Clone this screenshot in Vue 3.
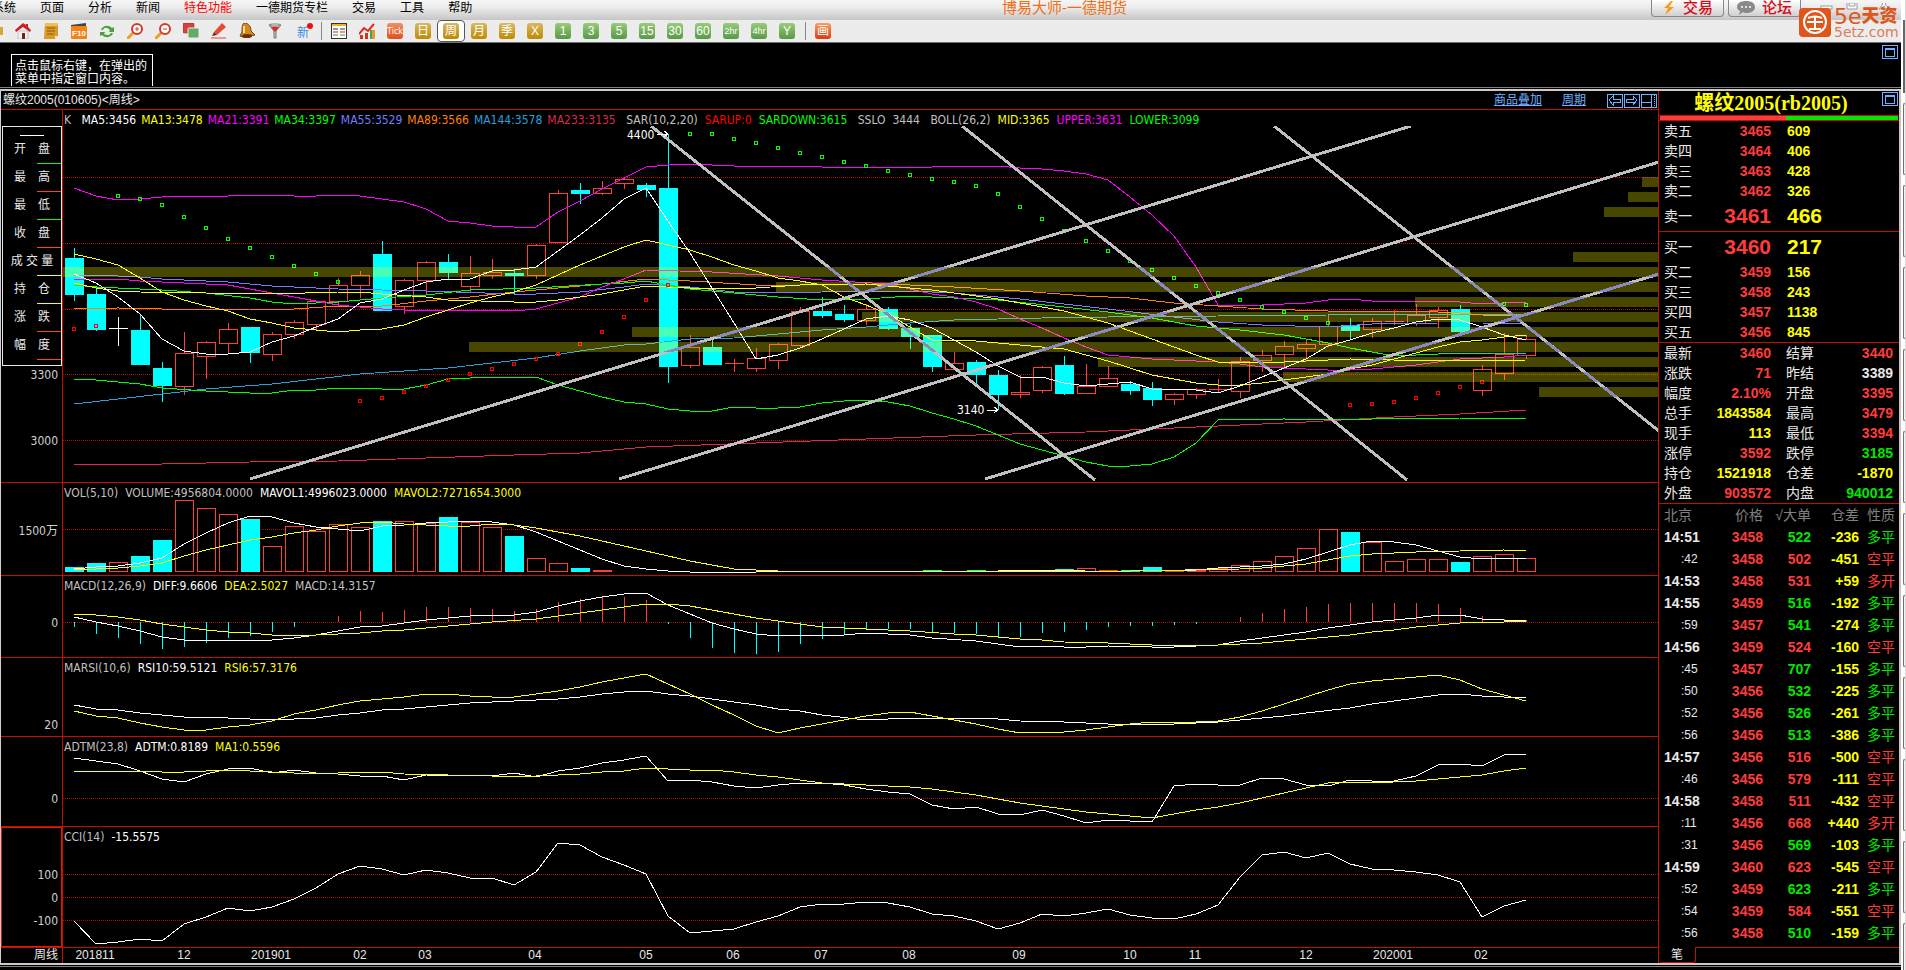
<template>
  <div class="screen">
    <div class="desk">
      <header class="menubar">
        <nav class="menu">
          <a v-for="item in menu" :key="item" href="#" :class="{ hot: item === '特色功能' }">{{ item }}</a>
        </nav>
        <h1 class="app-title">博易大师-一德期货</h1>
        <div class="top-actions">
          <button type="button" class="top-btn">
            <svg width="14" height="14" viewBox="0 0 14 14"><path d="M9 0 2 7h4l-3 7 9-8H7l4-6z" fill="#f59a1c" /></svg>
            交易
          </button>
          <button type="button" class="top-btn">
            <svg width="18" height="14" viewBox="0 0 18 14">
              <path d="M9 0c5 0 9 2 9 6s-4 6-9 6c-1 0-2 0-3-1l-4 3 1-4C1 9 0 8 0 6c0-4 4-6 9-6z" fill="#8a8a8a" />
              <g fill="#fff"><circle cx="5" cy="6" r="1" /><circle cx="9" cy="6" r="1" /><circle cx="13" cy="6" r="1" /></g>
            </svg>
            论坛
          </button>
        </div>
        <div class="win-controls">
          <svg width="90" height="8" viewBox="0 0 90 8" fill="#fff" stroke="#9a9a9a">
            <rect x="6" y="3" width="11" height="3" />
            <path d="M32 -4h10v10h-10zM34 0h6v3h-6z" />
            <path d="m64 6 4-5-4-5h3l2 3 2-3h3l-4 5 4 5h-3l-2-3-2 3z" />
          </svg>
        </div>
        <div class="brand">
          <svg width="32" height="29" viewBox="0 0 32 29">
            <rect width="32" height="29" rx="4" fill="#e0551a" />
            <circle cx="16" cy="14" r="11" fill="none" stroke="#fff" stroke-width="2" />
            <path d="M9 10q7-3 14 0M8 14h16M16 9v12M10 21h12" fill="none" stroke="#fff" stroke-width="2" />
          </svg>
          <div class="brand-text">
            <div class="brand-name"><span>5e</span>天资</div>
            <div class="brand-url">5etz.com</div>
          </div>
        </div>
      </header>

      <div class="toolbar">
        <button type="button" class="tool" aria-label="首页">
          <svg viewBox="0 0 16 16"><path d="M3 8h10v8H3z" fill="#f0f0f0" stroke="#999" stroke-width=".5" /><path d="M8 0 0 7l1 2 7-5 7 5 1-2-3-3V1h-2v1z" fill="#c8202c" /><path d="M7 10h3v6H7z" fill="#7a2018" /></svg>
        </button>
        <button type="button" class="tool" aria-label="记事">
          <svg viewBox="0 0 16 16"><path d="M2 0h13v13l-3 3H1z" fill="#d89a28" /><path d="M2 0h13v3H2z" fill="#f0c050" /><path d="M4 5h8M4 8h8M4 11h7" stroke="#8a5a10" /><path d="m12 16 3-3h-3z" fill="#fce8a8" /></svg>
        </button>
        <button type="button" class="tool" aria-label="F10">
          <svg viewBox="0 0 16 16"><path d="M0 2 15 0v4H0z" fill="#444" /><rect y="3" width="16" height="13" rx="1" fill="#f08418" /><text x="8" y="13" class="f10">F10</text></svg>
        </button>
        <button type="button" class="tool" aria-label="刷新">
          <svg viewBox="0 0 16 16"><path d="M2 7c1-4 7-6 11-2l2-1v5H10l1-2C8 4 5 4 4 7zM14 10c-1 4-7 6-11 2l-2 1V9h5l-1 2c3 2 6 1 7-1z" fill="#4aa23a" /></svg>
        </button>
        <button v-for="sign in ['+', '-']" :key="sign" type="button" class="tool" :aria-label="sign === '+' ? '放大' : '缩小'">
          <svg viewBox="0 0 16 16">
            <path d="m1 15 6-6" stroke="#f0a01c" stroke-width="3" stroke-linecap="round" />
            <circle cx="10" cy="6" r="5" fill="#fff" stroke="#d83828" stroke-width="2" />
            <path :d="sign === '+' ? 'M10 4v4M8 6h4' : 'M8 6h4'" stroke="#d83828" />
          </svg>
        </button>
        <button type="button" class="tool" aria-label="叠加">
          <svg viewBox="0 0 16 16"><rect width="11" height="10" rx="1" fill="#d84040" stroke="#8a2020" stroke-width=".5" /><rect x="5" y="5" width="11" height="10" rx="1" fill="#68a868" stroke="#dff0df" /></svg>
        </button>
        <button type="button" class="tool" aria-label="画笔">
          <svg viewBox="0 0 16 16"><path d="m3 9 8-9 4 4-9 8z" fill="#e44c30" /><path d="m3 9 3 3-5 1z" fill="#603018" /><path d="M0 15h15" stroke="#f04040" stroke-width="1" /></svg>
        </button>
        <button type="button" class="tool" aria-label="预警">
          <svg viewBox="0 0 16 16"><path d="M5 0c5 0 7 4 7 8l4 4-12 2-3-1 2-4c0-4 0-7 2-9z" fill="#d08a20" stroke="#7a4208" /><path d="M5 3v7" stroke="#ffe080" stroke-width="2" /><ellipse cx="8" cy="13" rx="5" ry="2" fill="#6a3008" /></svg>
        </button>
        <button type="button" class="tool" aria-label="筛选">
          <svg viewBox="0 0 16 16"><path d="M2 2h12l-5 6v7H7V8z" fill="#c8c8c8" stroke="#777" /><path d="M4 4h8L8 9z" fill="#e02828" /><ellipse cx="8" cy="2" rx="6" ry="1" fill="#fff" stroke="#777" /></svg>
        </button>
        <button type="button" class="tool fresh">新<i class="dot"></i></button>
        <span class="sep"></span>
        <button type="button" class="tool" aria-label="报价">
          <svg viewBox="0 0 16 16"><rect x="0" y="0" width="16" height="16" fill="#fff" stroke="#333" stroke-width="2" /><path d="M1 1h14v2H1z" fill="#f0b020" /><path d="M2 6h5M9 6h5" stroke="#333" /><path d="M2 9h5M9 9h5" stroke="#e02020" /><path d="M2 12h5M9 12h5" stroke="#20a040" /></svg>
        </button>
        <button type="button" class="tool" aria-label="走势">
          <svg viewBox="0 0 16 16"><path d="M1 12h3v4H1z" fill="#d83020" /><path d="M6 10h3v6H6z" fill="#d83020" /><path d="M11 7h2v9h-2z" fill="#50a040" /><path d="M13 7h3v9h-3z" fill="#d8a030" /><path d="m0 11 5-6 4 3 6-7" fill="none" stroke="#e02828" stroke-width="2" /></svg>
        </button>
        <button
          v-for="p in periods"
          :key="p.text"
          type="button"
          class="tool period"
          :class="[p.tone, { active: p.text === '周', small: p.text.endsWith('hr') }]"
        >
          <span>{{ p.text }}</span>
        </button>
        <span class="sep"></span>
        <button type="button" class="tool period draw"><span>画</span></button>
      </div>

      <section class="notice">
        <p class="notice-box">点击鼠标右键，在弹出的<br>菜单中指定窗口内容。</p>
        <button type="button" class="max-btn" aria-label="最大化"></button>
      </section>

      <main class="workspace">
        <section class="chart">
          <div class="chart-title">
            <span>螺纹2005(010605)&lt;周线&gt;</span>
            <div class="chart-links">
              <a href="#">商品叠加</a>
              <a href="#">周期</a>
              <svg width="51" height="15" viewBox="0 0 51 15" fill="none" stroke="#6fb1ff" shape-rendering="crispEdges">
                <path d="M1 1h15v13H1zM18 1h15v13H18zM35 1h15v13H35z" />
                <path d="M3 7l4-4v3h7v3H7v3zM31 7l-4-4v3h-7v3h7v3z" />
                <path d="M36 9h9M45 1v13" />
                <path d="M48 2v11" stroke-dasharray="1 1" />
              </svg>
            </div>
          </div>

          <div
            v-for="panel in panels"
            :key="panel.id"
            class="panel"
            :class="panel.id"
            :style="{ flexGrow: panel.bottom - panel.top }"
          >
            <div class="axis">
              <svg :viewBox="`1 ${panel.top} 61 ${panel.bottom - panel.top}`" preserveAspectRatio="none">
                <text v-for="l in panel.labels" :key="l[0]" x="58" :y="l[1] + 5" class="axis-text">{{ l[0] }}</text>
              </svg>
              <div v-if="panel.id === 'k'" class="info-box">
                <div class="info-cursor"></div>
                <div v-for="f in fields" :key="f.name" class="info-row">
                  <span>{{ f.name }}</span>
                  <i :class="f.tone"></i>
                </div>
              </div>
            </div>
            <div class="plot">
              <div class="legend">
                <span v-for="l in panel.legend" :key="l[0]" :style="{ color: l[1] }">{{ l[0] }}</span>
              </div>
              <svg
                :viewBox="`63 ${panel.top + 16} 1595 ${panel.bottom - panel.top - 16}`"
                preserveAspectRatio="none"
                shape-rendering="crispEdges"
                fill="none"
              >
                <line v-for="g in panel.grid" :key="g" x1="63" x2="1658" :y1="g" :y2="g" class="grid" />

                <template v-if="panel.id === 'k'">
                  <g v-for="c in candles" :key="c.x" :class="c.tone">
                    <path :d="c.wick" />
                    <rect v-if="c.h" :x="c.x - 9" :y="c.y" width="18" :height="c.h" class="body" />
                    <path v-else :d="`M${c.x - 9} ${c.y}h19`" />
                  </g>
                </template>
                <template v-if="panel.id === 'vol'">
                  <rect
                    v-for="v in volumes"
                    :key="v.x"
                    :x="v.x - 9"
                    :y="v.y"
                    width="18"
                    :height="571 - v.y"
                    :class="v.tone"
                    class="body"
                  />
                </template>
                <template v-if="panel.id === 'macd'">
                  <path v-for="m in macdBars" :key="m.x" :d="`M${m.x} 622V${m.y}`" :class="m.tone" />
                </template>

                <polyline v-for="(s, i) in panel.series" :key="i" :points="s.points" :stroke="s.color" />

                <template v-if="panel.id === 'k'">
                  <circle v-for="(d, i) in sar" :key="i" :cx="d.x" :cy="d.y" r="2" :stroke="d.color" />
                  <rect v-for="b in profile" :key="b[1]" :x="b[0]" :y="b[1]" :width="1658 - b[0]" height="10" class="profile" />
                  <clipPath id="profile-clip">
                    <rect v-for="b in profile" :key="b[1]" :x="b[0]" :y="b[1]" :width="1658 - b[0]" height="10" />
                  </clipPath>
                  <path :d="trendLines" class="trend" />
                  <path :d="trendLines" class="trend over" clip-path="url(#profile-clip)" />
                  <text x="627" y="139" class="mark">4400</text>
                  <text x="957" y="414" class="mark">3140</text>
                  <path d="M657 134h11m-4-3 4 3-4 3M987 410h11m-4-3 4 3-4 3" stroke="#fff" />
                </template>
              </svg>
            </div>
          </div>

          <div class="dates">
            <div class="axis">周线</div>
            <svg viewBox="63 948 1595 15" preserveAspectRatio="none">
              <text v-for="d in dates" :key="d[1]" :x="d[1]" y="959" class="date-text">{{ d[0] }}</text>
            </svg>
          </div>
        </section>

        <aside class="quote">
          <div class="quote-title">
            <h2>螺纹2005(rb2005)</h2>
            <button type="button" class="max-btn" aria-label="最大化"></button>
          </div>
          <div class="ratio"><i></i></div>

          <table v-for="(side, n) in book" :key="n" class="book">
            <tbody>
              <tr v-for="r in side" :key="r[0]" :class="{ best: r[0].endsWith('一') }">
                <th scope="row">{{ r[0] }}</th>
                <td class="red price">{{ r[1] }}</td>
                <td class="yellow">{{ r[2] }}</td>
              </tr>
            </tbody>
          </table>

          <table class="stats">
            <tbody>
              <tr v-for="r in stats" :key="r[0]">
                <th scope="row">{{ r[0] }}</th>
                <td :class="r[2]">{{ r[1] }}</td>
                <th scope="row">{{ r[3] }}</th>
                <td :class="r[5]">{{ r[4] }}</td>
              </tr>
            </tbody>
          </table>

          <table class="ticks">
            <thead>
              <tr><th>北京</th><th>价格</th><th>√大单</th><th>仓差</th><th>性质</th></tr>
            </thead>
            <tbody>
              <tr v-for="(t, i) in ticks" :key="i">
                <td :class="{ sec: t.time[0] === ':' }">{{ t.time }}</td>
                <td class="red">{{ t.price }}</td>
                <td :class="t.tone">{{ t.size }}</td>
                <td class="yellow">{{ t.diff }}</td>
                <td :class="t.tone">{{ t.kind }}</td>
              </tr>
            </tbody>
          </table>

          <div class="tabs"><button type="button">笔</button><i></i></div>
        </aside>
      </main>
      <footer class="bottom-edge"></footer>
    </div>
    <div class="edge">
      <i class="edge-bar"></i>
      <i v-for="n in 11" :key="n" class="edge-box"></i>
    </div>
  </div>
</template>

<script setup>
const menu = ['系统', '页面', '分析', '新闻', '特色功能', '一德期货专栏', '交易', '工具', '帮助']

const periods = [
  { text: 'Tick', tone: 'tick' },
  ...['日', '周', '月', '季', 'X'].map(text => ({ text, tone: 'gold' })),
  ...['1', '3', '5', '15', '30', '60', '2hr', '4hr', 'Y'].map(text => ({ text, tone: 'lime' }))
]

const fields = [
  { name: '开　盘', tone: 'g' },
  { name: '最　高', tone: 'r' },
  { name: '最　低', tone: 'g' },
  { name: '收　盘', tone: 'r' },
  { name: '成 交 量', tone: 'y' },
  { name: '持　仓', tone: 'y' },
  { name: '涨　跌', tone: 'r' },
  { name: '幅　度', tone: 'r' }
]

// one bar every 22 units, the first one at 74
const barX = i => 74 + 22 * i
// samples are kept in thirds of a unit below the given base line
const level = (v, base) => base + Math.round(v / 3)

const pairs = text => text.split(' ').map(p => p.split(':').map(Number))

const line = (color, base, text) => ({
  color,
  points: pairs(text).map(([i, v]) => `${barX(i)},${level(v, base)}`).join(' ')
})

// kind, high, body top, body bottom, low
const candleData = `d 414 444 552 573|d 529 552 657 663|w 621 655 655 708|d 612 660 762 762|d 756 774 825 876
u 666 730 827 855|u 693 697 737 807|u 639 658 698 732|d 651 651 726 759|u 666 673 731 753|u 630 637 671 687
u 574 574 641 660|u 504 526 574 588|u 483 496 524 565|d 393 432 600 603|u 507 511 587 612|u 453 457 509 552
d 432 456 486 507|u 438 490 527 547|u 447 487 494 507|d 480 489 495 552|u 402 406 494 507|u 240 250 395 395
d 219 240 249 282|u 213 235 248 255|u 204 208 218 237|d 219 225 237 261|d 72 234 768 819|u 675 712 764 774
d 690 711 762 762|u 747 760 760 786|u 714 745 773 786|u 699 703 749 777|u 591 604 704 711|d 561 603 615 624
d 585 612 627 636|u 582 598 629 645|d 591 597 654 660|d 642 654 678 717|d 675 675 768 786|u 726 760 776 780
d 750 756 792 831|d 780 795 852 900|u 795 847 851 864|u 768 772 839 849|d 738 765 849 855|u 762 827 848 852
u 768 805 827 827|d 813 822 840 855|d 816 834 867 888|u 849 853 866 885|u 834 838 851 867|u 807 838 838 846
u 741 754 842 864|u 720 736 749 786|u 693 709 731 774|u 690 703 713 744|u 615 647 701 710|d 624 645 660 690
u 624 634 656 684|u 600 634 634 645|u 582 616 638 648|u 591 601 620 654|d 585 597 663 669|u 766 778 839 858
u 669 731 788 810|u 676 688 734 748`

const tones = { d: 'down', u: 'up', w: 'flat' }

const candles = candleData.split(/[|\n]/).map((row, i) => {
  const [kind, ...rest] = row.split(' ')
  const [high, top, bottom, low] = rest.map(v => level(Number(v), 110))
  const x = barX(i)
  return { x, y: top, h: bottom - top, tone: tones[kind], wick: `M${x} ${high}V${top}M${x} ${bottom}V${low}` }
})

const volumes = ('d276 d264 u262 d243 d195 u76 u100 u118 d132 u214 u154 u169 u148 u157 d138 u139 u145 d126 u142 u157 ' +
  'd183 u250 u265 d279 u285 u287 d287 d287 u287 d287 u287 u287 u287 d287 u287 u287 d287 u287 u287 d285 u287 d285 u287 ' +
  'u287 u287 d282 u280 u286 d286 d276 u284 u284 u280 u271 u259 u244 u220 u163 d171 u202 u259 u253 u253 d261 u244 u238 u250')
  .split(' ')
  .map((v, i) => ({ x: barX(i), y: level(Number(v.slice(1)), 475), tone: tones[v[0]] }))

const macdBars = pairs('0:456 1:477 2:489 3:507 4:522 5:516 6:504 7:489 8:483 9:471 10:456 12:423 13:408 14:411 15:405 ' +
  '16:396 17:396 18:399 19:402 20:408 21:402 22:381 23:372 24:366 25:366 26:375 27:447 28:489 29:519 30:534 31:537 ' +
  '32:531 33:507 34:492 35:480 36:465 37:462 38:462 39:471 40:474 41:477 42:486 43:486 44:474 45:471 46:465 47:456 ' +
  '48:453 49:453 50:450 51:446 53:426 54:414 55:402 56:396 57:387 58:384 59:384 60:384 61:384 62:387 63:399 64:423 65:433 66:435')
  .map(([i, v]) => ({ x: barX(i), y: level(v, 475), tone: v > 442 ? 'down' : 'up' }))

const dots = (color, text) => pairs(text).map(([i, v]) => ({ color, x: barX(i), y: level(v, 110) }))

const sar = [
  ...dots('#00ff00', '2:259 3:268 4:286 5:322 6:355 7:388 8:415 9:442 10:469 11:493 12:517 28:73 29:73 30:88 31:100 32:115 ' +
    '33:130 34:142 35:157 36:169 37:184 38:196 39:208 40:217 41:229 42:253 43:292 44:328 45:364 46:394 47:424 48:454 ' +
    '49:481 50:505 51:529 52:550 53:571 54:590 55:607 56:625 57:640 65:583 66:586'),
  ...dots('#ff0000', '0:658 1:649 13:874 14:865 15:847 16:829 17:811 18:793 19:778 20:763 21:748 22:733 23:703 24:667 ' +
    '25:622 26:571 27:526 58:886 59:883 60:877 61:865 62:850 63:832 64:817')
]

// left edge and top of every price volume bar
const profile = [
  [1642, 177], [1628, 192], [1604, 207], [1573, 252], [63, 267], [776, 282], [1415, 297],
  [862, 312], [632, 327], [469, 342], [1098, 357], [1283, 372], [1539, 387]
]

const trendLines = 'M250 479L1411 126M619 479L1659 162M985 479L1659 274M651 126L861 293L962 374L1095 480' +
  'M962 126L1086 225L1290 386L1407 480M1274 126L1659 431'

const panels = [
  {
    id: 'k',
    top: 110,
    bottom: 482,
    labels: [['3300', 374], ['3000', 440]],
    grid: [177, 243, 309, 374, 440],
    legend: [
      ['K\u2002', '#c0c0c0'], ['MA5:3456', '#ffffff'], ['MA13:3478', '#ffff00'], ['MA21:3391', '#ff00ff'],
      ['MA34:3397', '#00ff00'], ['MA55:3529', '#7a7aff'], ['MA89:3566', '#ff8000'], ['MA144:3578', '#28a0dc'],
      ['MA233:3135\u00a0', '#dc2850'], ['SAR(10,2,20)', '#c0c0c0'], ['SARUP:0', '#ff0000'],
      ['SARDOWN:3615\u00a0', '#00ff00'], ['SSLO', '#c0c0c0'], ['3444\u00a0', '#c0c0c0'], ['BOLL(26,2)', '#c0c0c0'],
      ['MID:3365', '#ffff00'], ['UPPER:3631', '#ff00ff'], ['LOWER:3099', '#00ff00']
    ],
    series: [
      line('#dc2850', 110, '0:1063 4:1063 8:1057 12:1054 16:1045 20:1036 23:1028 26:1012 31:1000 36:986 41:974 46:965 52:949 56:936 60:922 63:913 66:901'),
      line('#28a0dc', 110, '0:883 2:868 4:853 6:838 9:823 11:808 13:793 15:784 17:775 19:760 21:745 23:724 25:706 26:702 28:688 30:684 32:673 34:661 36:650 38:640 40:631 44:625 47:622 52:619 57:616 66:611'),
      line('#ff8000', 110, '0:598 2:595 6:601 8:598 10:596 12:589 14:589 16:574 18:562 20:547 22:535 24:523 26:508 28:514 31:526 33:524 36:523 38:526 40:532 43:544 46:559 48:565 50:580 52:589 54:598 57:604 60:604 62:607 63:609 64:616 66:619'),
      line('#7a7aff', 110, '0:496 1:496 3:502 4:508 7:517 9:529 12:538 16:544 20:553 21:553 23:547 25:532 26:522 28:532 30:547 32:550 34:547 36:544 38:544 40:550 43:568 45:582 47:598 50:620 52:636 54:646 57:650 59:643 62:638 64:640 66:643'),
      line('#00ff00', 110, '0:526 1:532 2:535 4:541 6:550 8:565 9:576 10:583 12:577 13:571 14:565 16:556 18:541 21:535 24:523 25:520 26:514 27:526 28:538 30:550 32:562 34:571 36:568 38:559 40:565 42:571 45:590 47:605 49:625 51:648 53:661 55:676 57:700 58:715 60:739 62:733 63:730 66:730'),
      line('#ff00ff', 110, '0:508 2:508 3:514 5:520 7:526 8:538 9:550 10:562 11:574 12:586 13:590 14:598 15:601 19:601 20:604 21:598 22:580 23:562 24:532 25:506 26:481 29:487 32:499 34:511 37:523 38:537 39:552 40:562 41:576 42:598 43:628 44:655 45:683 46:710 47:736 48:740 49:748 52:757 53:763 54:770 56:778 57:781 58:781 59:778 61:766 62:757 63:748 65:742 66:734'),
      line('#00ff00', 110, '0:808 1:811 2:817 3:823 4:835 6:844 8:850 9:850 10:841 11:841 12:835 13:835 14:838 15:838 16:826 17:808 18:805 19:802 21:802 22:826 23:844 24:860 25:877 26:883 27:898 28:904 29:904 30:892 31:895 32:895 33:892 34:880 35:874 36:871 37:877 38:889 39:910 40:926 41:949 42:976 43:1003 44:1019 45:1039 46:1057 47:1069 48:1069 49:1063 50:1042 51:1000 52:931 55:928 58:930 60:925 61:928 63:925 66:925'),
      line('#ff00ff', 110, '0:235 1:259 2:271 3:268 4:262 5:259 7:259 8:256 9:256 10:259 11:259 12:256 13:259 14:268 15:277 16:298 17:334 18:340 19:349 20:352 21:352 22:307 23:274 24:238 25:204 26:172 27:166 28:163 29:166 30:169 33:169 34:172 39:172 40:169 42:169 43:173 44:178 45:184 46:193 47:211 48:260 49:316 50:379 51:472 52:586 54:586 56:580 57:571 58:568 59:574 60:577 61:574 62:574 63:577 64:583 65:580 66:577'),
      line('#ffff00', 110, '0:520 1:535 2:544 3:547 9:553 12:547 13:547 14:553 16:562 17:570 20:577 21:577 22:571 23:562 24:553 25:540 26:528 28:533 31:533 33:526 36:523 37:527 39:541 42:566 45:603 47:640 49:688 50:711 51:734 52:757 55:757 58:748 60:751 63:751 64:754 66:750'),
      line('#ffff00', 110, '0:433 1:448 2:466 3:504 4:546 5:570 6:589 7:604 8:628 9:640 10:655 11:661 12:667 13:661 14:658 15:646 16:622 17:600 18:580 19:562 20:547 21:526 22:496 23:466 24:438 25:412 26:391 27:406 28:421 29:442 30:464 31:484 32:503 33:514 34:526 35:562 36:585 37:612 38:650 39:690 40:691 41:694 42:700 43:706 44:710 45:718 46:736 47:754 48:775 49:796 50:808 51:820 52:826 53:826 54:820 55:811 56:801 57:792 58:778 59:764 60:748 61:729 62:710 63:695 64:691 65:682 66:676'),
      line('#ffffff', 110, '0:493 1:520 2:562 3:612 4:688 5:724 6:733 7:733 8:727 9:697 10:679 11:652 12:628 13:580 14:568 15:541 16:517 17:508 18:508 19:484 20:481 21:472 22:424 23:376 24:325 25:268 26:235 27:334 28:430 29:534 30:640 31:748 32:736 33:715 34:688 35:658 36:628 37:619 38:630 39:655 40:690 41:727 42:768 43:802 44:802 45:820 46:829 47:821 48:817 49:838 50:838 51:841 52:848 53:829 54:802 55:775 56:748 57:709 58:691 59:670 60:655 61:637 62:628 63:631 64:652 65:676 66:691')
    ]
  },
  {
    id: 'vol',
    top: 483,
    bottom: 575,
    labels: [['1500万', 530]],
    grid: [529],
    legend: [['VOL(5,10)', '#c0c0c0'], ['VOLUME:4956804.0000', '#c0c0c0'], ['MAVOL1:4996023.0000', '#ffffff'], ['MAVOL2:7271654.3000', '#ffff00']],
    series: [
      line('#ffffff', 475, '0:282 1:277 2:274 3:264 4:249 5:207 6:175 7:145 8:124 9:127 10:145 11:157 12:163 13:169 14:154 15:151 16:145 17:142 18:139 19:142 20:151 21:172 22:199 23:226 24:252 25:274 26:283 27:289 28:292 31:292 34:289 40:290 42:287 46:284 49:285 51:284 52:280 53:277 54:274 55:268 56:253 57:231 58:211 59:199 60:202 61:211 62:229 63:247 64:253 65:250 66:250'),
      line('#ffff00', 475, '0:284 2:280 3:274 4:264 5:243 6:226 7:210 8:195 9:187 10:175 11:166 12:154 13:145 14:142 15:148 16:151 17:154 18:154 19:148 20:151 21:160 22:172 23:184 24:199 25:214 26:229 27:244 28:259 29:271 30:283 32:289 34:291 40:289 48:287 53:283 54:280 55:274 56:268 57:256 58:244 59:238 61:232 63:229 65:226 66:229')
    ]
  },
  {
    id: 'macd',
    top: 576,
    bottom: 657,
    labels: [['0', 622]],
    grid: [622],
    legend: [['MACD(12,26,9)', '#c0c0c0'], ['DIFF:9.6606', '#ffffff'], ['DEA:2.5027', '#ffff00'], ['MACD:14.3157', '#c0c0c0']],
    series: [
      line('#ffffff', 475, '0:427 1:442 2:454 3:469 4:487 5:496 9:496 10:490 11:481 12:469 13:457 14:454 15:445 16:436 17:430 18:424 19:421 20:421 21:412 22:394 23:379 24:367 25:358 26:355 27:391 28:418 29:445 30:463 31:478 32:484 33:481 35:481 36:475 37:478 38:481 39:490 41:499 43:517 44:514 45:517 46:517 47:514 49:517 50:515 52:511 53:499 55:481 56:472 57:460 59:442 61:430 62:421 63:421 64:433 65:436 66:437'),
      line('#ffff00', 475, '0:418 1:421 2:427 3:436 4:448 5:457 6:466 7:472 8:475 9:481 11:481 13:475 14:469 15:466 17:454 19:442 21:433 22:424 24:406 25:397 26:388 27:388 28:394 29:406 30:418 31:430 32:439 33:448 34:456 36:463 38:469 40:478 41:481 43:493 44:496 45:502 47:505 49:511 52:511 54:505 56:493 58:481 59:472 60:466 61:457 63:445 64:442 65:442 66:439')
    ]
  },
  {
    id: 'marsi',
    top: 658,
    bottom: 736,
    labels: [['20', 724]],
    grid: [],
    legend: [['MARSI(10,6)', '#c0c0c0'], ['RSI10:59.5121', '#ffffff'], ['RSI6:57.3176', '#ffff00']],
    series: [
      line('#ffffff', 475, '0:691 1:703 2:706 3:715 5:727 6:727 7:730 9:736 10:733 11:730 12:721 13:715 14:706 15:703 18:685 20:679 22:673 23:667 24:658 25:652 26:649 27:658 28:664 30:682 31:691 32:703 33:709 34:720 36:736 38:730 41:730 42:733 43:739 45:742 47:748 50:748 52:742 55:724 56:715 58:700 59:688 61:670 62:661 63:658 64:664 66:670'),
      line('#ffff00', 475, '0:709 1:724 2:730 3:745 4:757 5:766 6:766 7:757 8:751 9:739 10:718 11:706 12:691 13:679 15:667 16:658 17:658 18:664 19:667 20:665 21:658 22:649 23:637 24:622 26:598 27:628 28:658 29:691 30:721 31:754 32:775 33:760 34:747 35:736 36:724 37:715 38:712 39:724 40:736 41:748 42:763 43:775 44:772 45:772 46:766 47:757 48:748 49:742 50:745 52:739 53:727 54:709 55:688 56:667 57:646 58:628 59:619 60:613 62:601 63:616 64:643 65:661 66:679')
    ]
  },
  {
    id: 'adtm',
    top: 737,
    bottom: 826,
    labels: [['0', 798]],
    grid: [798],
    legend: [['ADTM(23,8)', '#c0c0c0'], ['ADTM:0.8189', '#ffffff'], ['MA1:0.5596', '#ffff00']],
    series: [
      line('#ffffff', 730, '0:85 1:94 2:103 3:124 4:148 5:157 6:133 7:118 8:115 9:130 10:121 11:129 12:131 13:139 14:139 15:151 16:136 19:139 20:130 21:142 22:124 23:115 24:100 25:91 26:79 27:154 28:151 29:157 30:169 31:175 32:166 33:160 34:158 35:166 36:178 37:187 38:193 39:226 40:238 41:232 42:253 43:256 44:241 45:257 46:280 47:271 49:277 50:169 51:163 52:166 53:166 54:145 55:148 56:166 57:169 58:151 59:154 60:154 61:139 62:106 63:103 64:109 65:76 66:73'),
      line('#ffff00', 730, '0:127 1:124 3:124 4:127 5:127 7:121 10:130 12:130 13:127 14:127 15:133 19:139 21:139 23:133 24:127 25:124 26:115 28:121 29:121 30:127 31:136 32:142 33:151 34:160 36:166 38:172 39:178 41:196 43:220 46:247 49:265 51:241 52:232 53:220 57:160 60:157 61:154 63:142 64:136 65:124 66:115')
    ]
  },
  {
    id: 'cci',
    top: 827,
    bottom: 947,
    labels: [['100', 874], ['0', 897], ['-100', 920]],
    grid: [874, 897, 920],
    legend: [['CCI(14)', '#c0c0c0'], ['-15.5575', '#ffffff']],
    series: [
      line('#ffffff', 730, '0:574 1:643 2:637 3:628 4:634 5:583 6:562 7:535 8:544 9:532 10:508 11:475 12:433 13:409 14:418 15:436 16:421 17:430 18:445 19:445 20:466 21:427 22:340 23:346 24:382 25:406 26:433 27:559 28:610 29:604 30:596 31:577 32:559 33:532 34:523 35:523 36:517 37:520 38:532 39:553 40:559 41:574 42:598 43:580 44:553 45:559 46:550 47:538 48:556 49:565 50:568 51:553 52:526 53:440 54:376 55:367 56:385 57:370 58:403 59:418 60:421 61:427 62:436 63:457 64:562 65:529 66:511')
    ]
  }
]

const dates = [
  ['201811', 95], ['12', 184], ['201901', 271], ['02', 360], ['03', 425], ['04', 535], ['05', 646], ['06', 733],
  ['07', 821], ['08', 909], ['09', 1019], ['10', 1130], ['11', 1195], ['12', 1306], ['202001', 1393], ['02', 1481]
]

const book = [
  [['卖五', 3465, 609], ['卖四', 3464, 406], ['卖三', 3463, 428], ['卖二', 3462, 326], ['卖一', 3461, 466]],
  [['买一', 3460, 217], ['买二', 3459, 156], ['买三', 3458, 243], ['买四', 3457, 1138], ['买五', 3456, 845]]
]

const stats = [
  ['最新', '3460', 'red', '结算', '3440', 'red'],
  ['涨跌', '71', 'red', '昨结', '3389', 'white'],
  ['幅度', '2.10%', 'red', '开盘', '3395', 'red'],
  ['总手', '1843584', 'yellow', '最高', '3479', 'red'],
  ['现手', '113', 'yellow', '最低', '3394', 'red'],
  ['涨停', '3592', 'red', '跌停', '3185', 'green'],
  ['持仓', '1521918', 'yellow', '仓差', '-1870', 'yellow'],
  ['外盘', '903572', 'red', '内盘', '940012', 'green']
]

const ticks = `14:51 3458 522 -236 多平
:42 3458 502 -451 空平
14:53 3458 531 +59 多开
14:55 3459 516 -192 多平
:59 3457 541 -274 多平
14:56 3459 524 -160 空平
:45 3457 707 -155 多平
:50 3456 532 -225 多平
:52 3456 526 -261 多平
:56 3456 513 -386 多平
14:57 3456 516 -500 空平
:46 3456 579 -111 空平
14:58 3458 511 -432 空平
:11 3456 668 +440 多开
:31 3456 569 -103 多平
14:59 3460 623 -545 空平
:52 3459 623 -211 多平
:54 3459 584 -551 空平
:56 3458 510 -159 多平`.split('\n').map(row => {
  const [time, price, size, diff, kind] = row.split(' ')
  return { time, price, size, diff, kind, tone: kind === '多平' ? 'green' : 'red' }
})
</script>

<style>
body {
  background: #000;
  overflow: hidden;
}
</style>

<style scoped>
.screen {
  display: flex;
  height: 100vh;
  font-family: "Liberation Sans", "Noto Sans CJK SC", sans-serif;
  font-size: 12px;
  color: #e8e8e8;
}

.screen *,
.screen *::before {
  box-sizing: border-box;
}

button {
  font: inherit;
  margin: 0;
  padding: 0;
  border: 0;
  background: none;
  color: inherit;
}

.desk {
  flex: 1;
  min-width: 0;
  display: flex;
  flex-direction: column;
}

/* menu */
.menubar {
  position: relative;
  flex: none;
  display: flex;
  height: 20px;
  background: linear-gradient(#f6f6f6, #eaeaea 40%, #c6c6c6);
}

.menu {
  display: flex;
  gap: 24px;
  margin-left: -8px;
  line-height: 17px;
}

.menu a {
  color: #000;
  text-decoration: none;
  white-space: nowrap;
}

.menu a.hot {
  color: #f00;
}

.app-title {
  position: absolute;
  left: 0;
  right: 0;
  width: 100%;
  padding-left: 228px;
  margin: 0;
  text-align: center;
  font-size: 15px;
  font-weight: 400;
  line-height: 16px;
  color: #f06e14;
  pointer-events: none;
}

.top-actions {
  display: flex;
  gap: 4px;
  margin-left: auto;
}

.top-btn {
  width: 73px;
  height: 17px;
  display: flex;
  align-items: center;
  justify-content: center;
  gap: 7px;
  border: 1px solid #888;
  border-top: 0;
  border-radius: 0 0 4px 4px;
  background: linear-gradient(#fff, #d0d0d0);
  font-size: 15px;
  font-weight: 500;
  line-height: 14px;
  color: #d80c18;
}

.win-controls {
  width: 100px;
  padding-left: 14px;
}

.brand {
  position: absolute;
  right: 0;
  top: 8px;
  z-index: 2;
  display: flex;
  gap: 3px;
  color: #e0551a;
}

.brand-text {
  width: 67px;
}

.brand-name {
  display: flex;
  height: 17px;
  font-size: 18px;
  font-weight: 900;
  line-height: 17px;
  white-space: nowrap;
}

.brand-name span {
  font: 22px/17px "DejaVu Sans", sans-serif;
}

.brand-url {
  font: 14px/14px "DejaVu Sans", sans-serif;
  color: #d88058;
}

/* toolbar */
.toolbar {
  flex: none;
  display: flex;
  height: 23px;
  padding-left: 9px;
  background: #ececec linear-gradient(#d8a830, #d8a830) 0 7px / 3px 8px no-repeat;
  border-bottom: 1px solid #707070;
}

.tool {
  position: relative;
  width: 28px;
  height: 22px;
  display: flex;
  align-items: center;
  justify-content: center;
}

.tool svg {
  width: 16px;
  height: 16px;
}

.f10 {
  font: bold 8px "Liberation Sans", sans-serif;
  fill: #fff;
  text-anchor: middle;
}

.fresh {
  color: #3c8ce0;
}

.dot {
  position: absolute;
  top: 3px;
  right: 4px;
  width: 6px;
  height: 6px;
  border-radius: 50%;
  background: #f01010;
}

.sep {
  width: 8px;
  height: 18px;
  margin-top: 2px;
  background: linear-gradient(#888, #888) center / 1px 100% no-repeat;
}

.period span {
  width: 16px;
  height: 16px;
  border-radius: 3px;
  font-size: 12px;
  line-height: 16px;
  text-align: center;
  color: #fff;
}

.tick span {
  background: linear-gradient(#f09060, #e05020);
  font: 9px/16px "DejaVu Sans Condensed", sans-serif;
}

.gold span {
  background: linear-gradient(#d8b860, #c08a00);
}

.lime span {
  background: linear-gradient(#98cc78, #589848);
}

.small span {
  font-size: 9px;
}

.draw span {
  background: linear-gradient(#f8a060, #e03810);
}

.active {
  background: #fff;
  border: 1px solid #555;
  border-radius: 4px;
}

/* upper empty window */
.notice {
  flex: none;
  display: flex;
  justify-content: space-between;
  height: 48px;
  padding-left: 11px;
  background: #000;
  border-bottom: 2px solid #d0c8c8;
  box-shadow: inset 0 -1px #000, inset 0 -2px #808080;
}

.notice-box {
  height: 32px;
  margin: 11px 0 0;
  padding: 5px 5px 0 3px;
  border: 1px solid #fff;
  border-bottom: 0;
  line-height: 13px;
  color: #fff;
}

.max-btn {
  width: 16px;
  height: 14px;
  margin: 2px 3px 0 0;
  border: 1px solid #6fb1ff;
  display: flex;
  align-items: center;
  justify-content: center;
}

.max-btn::before {
  content: "";
  width: 10px;
  height: 9px;
  border: 1px solid #6fb1ff;
  border-top-width: 2px;
}

/* chart */
.workspace {
  flex: 1;
  min-height: 0;
  display: flex;
  background: #000;
  border-left: 1px solid #d0d0d0;
  border-right: 2px solid #d0c0c0;
}

.chart {
  flex: 1;
  min-width: 0;
  display: flex;
  flex-direction: column;
}

.chart-title {
  flex: none;
  height: 19px;
  display: flex;
  justify-content: space-between;
  padding: 0 1px 0 2px;
  border-bottom: 1px solid #c01000;
  line-height: 18px;
}

.chart-links {
  display: flex;
  align-items: center;
  gap: 20px;
}

.chart-links a {
  color: #6fb1ff;
}

.panel {
  flex: 1 1 0;
  min-height: 0;
  display: flex;
  border-bottom: 1px solid #c01000;
}

.axis {
  position: relative;
  flex: none;
  width: 62px;
  display: flex;
  border-right: 1px solid #c01000;
}

.cci .axis {
  box-shadow: inset 0 0 0 1px #e01808;
}

.axis svg,
.plot svg,
.dates svg {
  display: block;
  flex: 1;
  width: 100%;
  min-width: 0;
  min-height: 0;
}

.axis-text {
  font: 12px "DejaVu Sans Condensed", "Noto Sans CJK SC", sans-serif;
  fill: #d0d0d0;
  stroke: none;
  text-anchor: end;
}

.plot {
  flex: 1;
  min-width: 0;
  display: flex;
  flex-direction: column;
}

.legend {
  flex: none;
  display: flex;
  gap: 7px;
  height: 16px;
  padding-left: 1px;
  font: 12px/20px "DejaVu Sans Condensed", sans-serif;
  white-space: nowrap;
}

.k .legend {
  gap: 5px;
}

.k .legend span:nth-child(n + 10) {
  margin-left: 2px;
}

.grid {
  stroke: #b00c0c;
  stroke-dasharray: 1 1;
}

.up {
  stroke: #ff3c3c;
}

.down {
  stroke: #00ffff;
}

.flat {
  stroke: #fff;
}

.body {
  fill: #000;
}

.down .body,
.down.body {
  fill: #00ffff;
}

.profile {
  fill: #ffff00;
  fill-opacity: 0.28;
}

.trend {
  stroke: #c0c0c0;
  stroke-width: 3;
}

.trend.over {
  stroke: #8a8ac0;
}

.mark {
  font: 12px "DejaVu Sans Condensed", sans-serif;
  fill: #fff;
}

.info-box {
  position: absolute;
  left: 1px;
  top: 16px;
  width: 60px;
  height: 240px;
  border: 1px solid #e8e8e8;
  background: #000;
  font-size: 12px;
}

.info-cursor {
  width: 24px;
  height: 9px;
  margin: 0 auto;
  border-bottom: 1px solid #fff;
}

.info-row {
  height: 28px;
  line-height: 26px;
  text-align: center;
  white-space: nowrap;
}

.info-row span {
  display: block;
  height: 27px;
}

.info-row i {
  display: block;
  width: 24px;
  height: 1px;
  margin-left: auto;
}

.info-row .g {
  background: #0f0;
}

.info-row .r {
  background: #ff3c3c;
}

.info-row .y {
  background: #ff0;
}

.dates {
  flex: none;
  display: flex;
  height: 15px;
}

.dates .axis {
  justify-content: flex-end;
  padding-right: 4px;
  line-height: 14px;
}

.date-text {
  font: 12px "Liberation Sans", sans-serif;
  fill: #e8e8e8;
  text-anchor: middle;
}

/* quote column */
.quote {
  flex: none;
  width: 241px;
  display: flex;
  flex-direction: column;
  border-left: 1px solid #c01000;
}

.quote-title {
  position: relative;
  height: 24px;
}

.quote-title h2 {
  margin: 0;
  padding-right: 16px;
  text-align: center;
  font: bold 20px/24px "Liberation Serif", "Noto Sans CJK SC", serif;
  color: #ff0;
}

.quote-title .max-btn {
  position: absolute;
  top: -1px;
  right: -2px;
}

.ratio {
  height: 6px;
  padding: 0 1px;
  border-top: 1px solid #c01000;
  border-bottom: 1px solid #c01000;
}

.ratio i {
  display: block;
  height: 4px;
  background: linear-gradient(90deg, #ff3c3c 53%, #00e800 53%);
}

table {
  width: 100%;
  border-collapse: collapse;
  table-layout: fixed;
  font-size: 14px;
}

th,
td {
  height: 20px;
  padding: 0;
  line-height: 20px;
  white-space: nowrap;
}

th {
  padding-left: 5px;
  font-weight: 400;
  text-align: left;
  color: #e8e8e8;
}

td {
  font-weight: 700;
}

.red {
  color: #ff3c3c;
}

.yellow {
  color: #ff0;
}

.green {
  color: #00e800;
}

.white {
  color: #e8e8e8;
}

.book,
.stats {
  border-bottom: 1px solid #c01000;
  border-collapse: separate;
  border-spacing: 0;
}

.book th {
  width: 58px;
}

.book .price {
  width: 62px;
  padding-right: 8px;
  text-align: right;
}

.book .yellow {
  padding-left: 8px;
}

.best th,
.best td {
  height: 30px;
  line-height: 30px;
}

.best td {
  font-size: 21px;
}

.stats th {
  width: 40px;
}

.stats td {
  width: 80px;
  padding-right: 8px;
  text-align: right;
}

.stats th:nth-child(3) {
  padding-left: 7px;
}

.stats td:last-child {
  padding-right: 6px;
}

.ticks th,
.ticks td {
  width: 48px;
  height: 22px;
  padding: 0 4px 0 0;
  line-height: 22px;
  text-align: right;
}

.ticks th {
  color: #808080;
}

.ticks th:first-child {
  width: 46px;
}

.ticks th:nth-child(2) {
  width: 62px;
}

.ticks th:last-child {
  width: 36px;
}

.ticks tr > :first-child {
  padding: 0 0 0 5px;
  text-align: left;
}

.ticks tr > .sec {
  padding-left: 22px;
  font-size: 12px;
  font-weight: 400;
}

.ticks tr > :last-child {
  padding: 0 4px;
  font-weight: 400;
}

.tabs {
  display: flex;
  margin-top: auto;
  height: 16px;
}

.tabs button {
  width: 37px;
  border: 1px solid #c01000;
  border-width: 0 1px 1px 0;
  border-radius: 0 0 3px 3px;
  line-height: 14px;
}

.tabs i {
  flex: 1;
  border-top: 1px solid #c01000;
}

.bottom-edge {
  flex: none;
  height: 7px;
  background: #000;
  border-top: 2px solid #d0c8c8;
  box-shadow: inset 0 1px #000, inset 0 2px #808080;
}

/* strip of the window behind */
.edge {
  width: 5px;
  padding: 20px 0 0 2px;
  background: #fff;
  border-right: 1px solid #d8d8d8;
  display: flex;
  flex-direction: column;
  gap: 10px;
  overflow: hidden;
}

.edge-bar {
  flex: none;
  height: 73px;
  background: #686868;
}

.edge-box {
  flex: none;
  height: 72px;
  border: 1px solid #707070;
  border-right: 0;
  border-radius: 3px 0 0 3px;
  background: #f4f4f4;
}
</style>
